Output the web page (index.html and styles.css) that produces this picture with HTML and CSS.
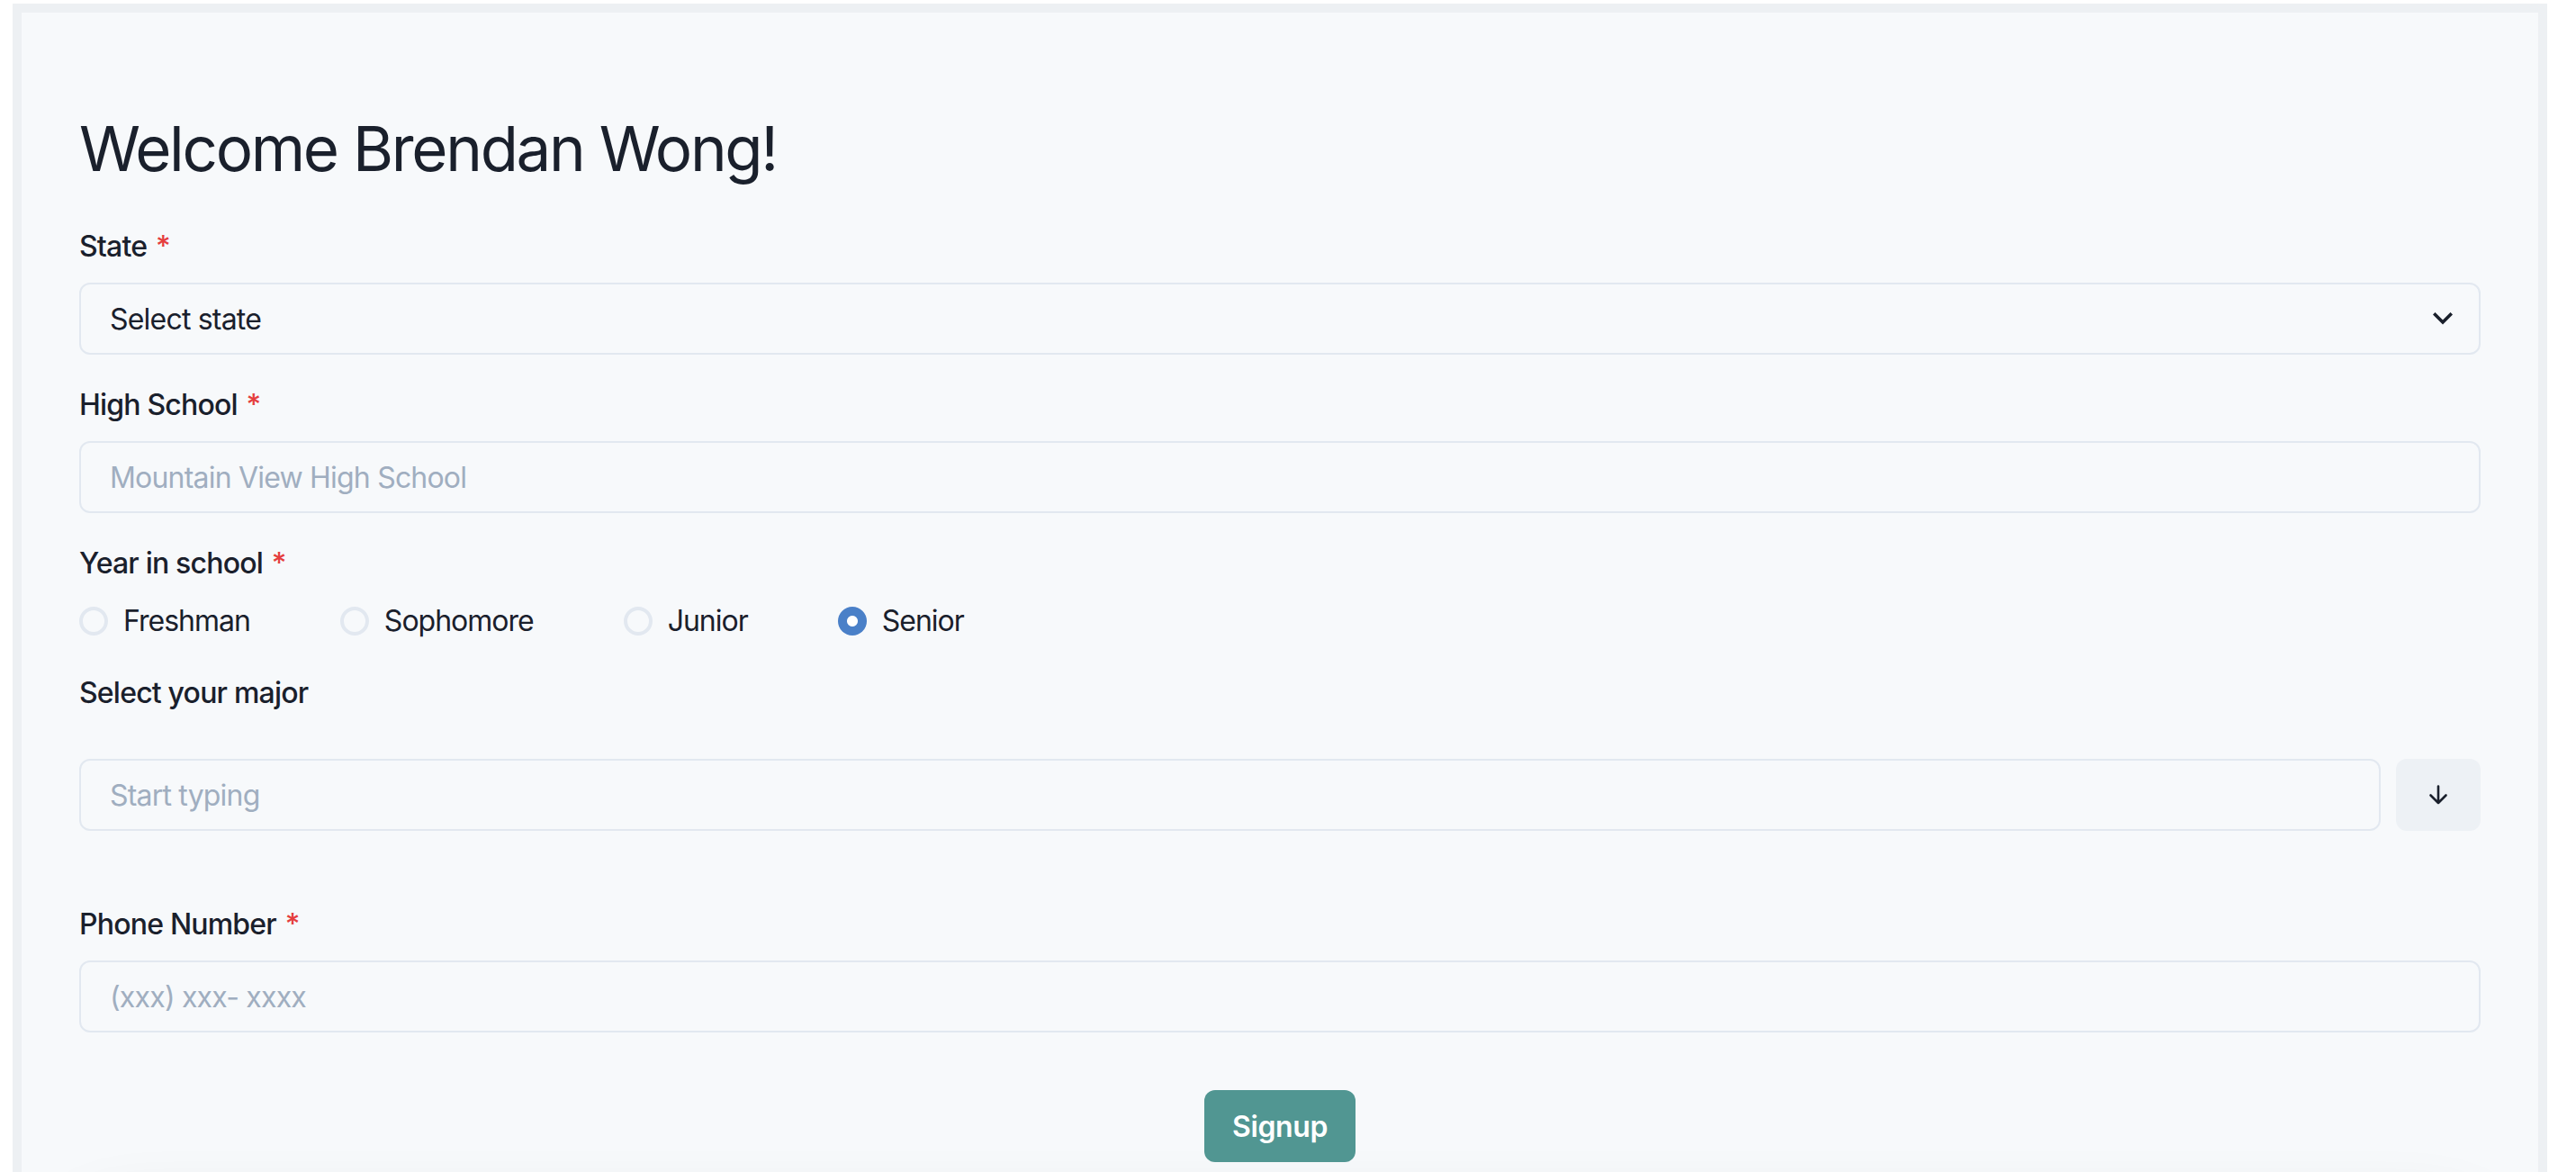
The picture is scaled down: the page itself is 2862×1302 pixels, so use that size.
FILE: index.html
```html
<!DOCTYPE html>
<html lang="en">
<head>
<meta charset="utf-8">
<title>Welcome</title>
<link rel="stylesheet" href="styles.css">
</head>
<body>
<div class="frame">
  <main class="panel">
    <h1 class="title">Welcome Brendan Wong!</h1>
    <form class="form">
      <div class="field">
        <label class="label">State <span class="req">*</span></label>
        <div class="select">
          <span class="select-text">Select state</span>
          <svg class="chev" width="22" height="14" viewBox="0 0 22 14"><path d="M2.5 2.5 L11 11 L19.5 2.5" fill="none" stroke="#1a202c" stroke-width="3.6" stroke-linecap="square"/></svg>
        </div>
      </div>
      <div class="field">
        <label class="label">High School <span class="req">*</span></label>
        <div class="input"><span class="ph">Mountain View High School</span></div>
      </div>
      <div class="field">
        <label class="label">Year in school <span class="req">*</span></label>
        <div class="radios">
          <div class="radio"><span class="dot"></span><span class="rtext">Freshman</span></div>
          <div class="radio"><span class="dot"></span><span class="rtext">Sophomore</span></div>
          <div class="radio"><span class="dot"></span><span class="rtext">Junior</span></div>
          <div class="radio"><span class="dot on"></span><span class="rtext">Senior</span></div>
        </div>
      </div>
      <div class="field major">
        <label class="label">Select your major</label>
        <div class="auto">
          <div class="input grow"><span class="ph">Start typing</span></div>
          <div class="iconbtn">
            <svg width="24" height="24" viewBox="0 0 24 24"><path d="M12 2.5 V21 M3.5 12.5 L12 21 L20.5 12.5" fill="none" stroke="#1a202c" stroke-width="2.6" stroke-linecap="round" stroke-linejoin="round"/></svg>
          </div>
        </div>
      </div>
      <div class="field">
        <label class="label">Phone Number <span class="req">*</span></label>
        <div class="input"><span class="ph">(xxx) xxx- xxxx</span></div>
      </div>
      <div class="actions">
        <div class="btn">Signup</div>
      </div>
    </form>
    <div class="below"></div>
  </main>
</div>
</body>
</html>
```

FILE: styles.css
```css
* { box-sizing: border-box; }
html, body { margin: 0; padding: 0; background: #ffffff; overflow: hidden; }
body {
  padding: 4px 32px 0 14px;
  font-family: Inter, "Liberation Sans", sans-serif;
  color: #1a202c;
  height: 1302px;
}
.frame {
  background: #edf0f3;
  padding: 10px 10px 0 10px;
  height: 100%;
}
.panel {
  background: #f7f9fb;
  padding: 64px 64px 0 64px;
  height: 100%;
  overflow: hidden;
}
.title {
  margin: 45px 0 43px 0;
  font-size: 69px;
  line-height: 84px;
  font-weight: 400;
  letter-spacing: -2.3px;
  color: #1a202c;
}
.form { display: flex; flex-direction: column; }
.field { display: flex; flex-direction: column; margin-bottom: 32px; }
.label {
  font-size: 32px;
  line-height: 48px;
  font-weight: 500;
  margin-bottom: 16px;
  letter-spacing: -0.8px;
}
.req { color: #e53e3e; margin-left: 2px; }
.select, .input {
  height: 80px;
  border: 2px solid #e2e8f0;
  border-radius: 12px;
  padding: 0 32px;
  display: flex;
  align-items: center;
  font-size: 32px;
  letter-spacing: -0.8px;
}
.select { justify-content: space-between; padding-right: 29px; }
.select-text { color: #1a202c; }
.ph { color: #a0aec0; }
.radios { display: flex; align-items: center; height: 48px; gap: 100px; }
.radio { display: flex; align-items: center; }
.dot {
  width: 32px; height: 32px;
  border-radius: 50%;
  border: 4px solid #e2e8f0;
  margin-right: 17px;
  flex: none;
}
.dot.on {
  border: none;
  background: radial-gradient(circle, #ffffff 0 5.5px, #4a80c8 6.5px);
}
.rtext { font-size: 32px; line-height: 48px; letter-spacing: -1px; }
.major .label { margin-bottom: 49px; }
.major { margin-bottom: 80px; }
.auto { display: flex; gap: 17px; }
.grow { flex: 1; }
.iconbtn {
  width: 94px; height: 80px;
  border-radius: 12px;
  background: #edf1f5;
  display: flex; align-items: center; justify-content: center;
}
.actions { display: flex; justify-content: center; margin-top: 32px; }
.btn {
  width: 168px; height: 80px;
  border-radius: 12px;
  background: #519692;
  color: #ffffff;
  font-size: 32px;
  font-weight: 600;
  display: flex; align-items: center; justify-content: center;
  letter-spacing: -0.4px;
}
.below {
  margin: 46px -40px 0;
  height: 200px;
  border-radius: 200px;
  box-shadow: 0 0 70px rgba(0,0,0,0.09);
  background: #f7f9fb;
}
```
